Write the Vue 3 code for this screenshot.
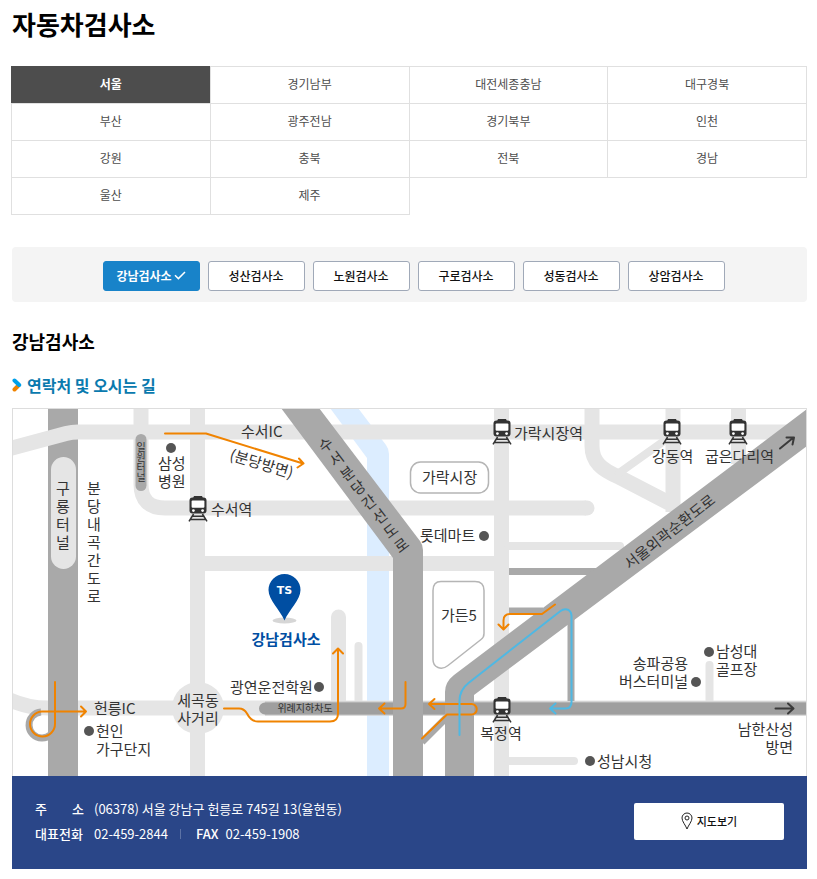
<template>
  <main class="page">
    <h1 class="page-title">자동차검사소</h1>

    <ul class="region-list">
      <li v-for="region in regions" :key="region" class="region-item">
        <a
          href="#"
          class="region-link"
          :class="{ active: region === activeRegion }"
          @click.prevent="activeRegion = region"
        >{{ region }}</a>
      </li>
    </ul>

    <div class="center-list">
      <button
        v-for="center in centers"
        :key="center"
        type="button"
        class="center-btn"
        :class="{ active: center === activeCenter }"
        @click="activeCenter = center"
      >
        {{ center }}
        <svg v-if="center === activeCenter" class="check-icon" viewBox="0 0 12 9" aria-hidden="true">
          <path d="M1 4.2 4.4 7.6 11 1" />
        </svg>
      </button>
    </div>

    <h2 class="center-title">{{ activeCenter }}</h2>

    <h3 class="section-title">
      <svg class="section-icon" viewBox="0 0 10 14" aria-hidden="true">
        <path d="M2.5 11.5 6 8" stroke="#f08300" />
        <path d="M2.5 2.5 7.2 7" stroke="#00a0e9" />
      </svg>
      연락처 및 오시는 길
    </h3>

    <div class="map-box">
      <svg class="map" viewBox="13 409 793 367">
        <defs>
          <symbol id="train" viewBox="0 0 20 26">
            <path d="M6 0h8l1 2.2H5z" fill="#333" />
            <rect x="1.5" y="1.6" width="17" height="16" rx="3" fill="#333" />
            <rect x="3.6" y="4.6" width="12.800" height="7.2" rx="1" fill="#fff" />
            <circle cx="5.4" cy="14.6" r="1.4" fill="#fff" />
            <circle cx="14.6" cy="14.6" r="1.4" fill="#fff" />
            <path
              d="M5.6 18 1 25.4M14.4 18 19 25.4M4.5 20.2h11M2.6 23.4h14.8"
              fill="none"
              stroke="#333"
              stroke-width="1.5"
            />
          </symbol>
        </defs>

        <!-- 탄천 -->
        <path class="river" d="M330 408h28l28 37q3 4 3 9v323h-22V458z" />

        <!-- 분당내곡간도로 -->
        <path class="highway" d="M48 408h30v369H48z" />

        <!-- 일반도로 -->
        <g class="road">
          <path d="M10 448.500 66 433.500Q72 432 78 432H808" />
          <path d="M141 408v76q0 24 24 24h421" />
          <path d="M586 508h1" stroke-linecap="round" />
          <path d="M197.500 408v369" />
          <path d="M204 563.500h298" />
          <path d="M501.500 408v369" />
          <path d="M592 408v38c0 16 10 24 27 31l50 26" />
          <path d="M673 408v104" />
          <path d="M738.500 408v56" />
          <path d="M338.500 617v86" stroke-linecap="round" />
          <path d="M10 700q18 8 38 8M78 708H808" />
          <path d="M619 473 664 441M508 546h112M358.500 646v56M709.500 665v40M508 761h66" class="road-thin" />
        </g>
        <circle cx="198" cy="708" r="26" fill="#e5e5e5" />

        <!-- 연결로 -->
        <g class="ramp">
          <path d="M509 571.500h90M509 611h34M571 600v101M422 742l28-28" />
          <path d="M41 712a13 13 0 1 0 14 14" />
        </g>

        <!-- 지하차도 -->
        <path d="M265 708.500H808" stroke="#c4c4c4" stroke-width="14" fill="none" />
        <path d="M300 708.500H808M300 708.500H265" stroke="#9f9f9f" stroke-width="12" fill="none" stroke-linecap="round" />

        <path class="highway" d="M281 408h38l101 133q3 4 3 9v227h-30V558z" />
        <path class="highway" d="M807 409 454 675q-9 7-9 17v85h29v-82L807 446z" />

        <rect x="51" y="457" width="25" height="112" rx="12.500" fill="#e5e5e5" />
        <rect x="135.500" y="434" width="11" height="57" rx="5.500" fill="#a9a9a9" />
        <rect class="area" x="410.500" y="462" width="78" height="31" rx="10" />
        <path class="area" d="M441 581.500h34q9 0 9 9v43q0 4-3 6l-33 26q-5 4-10 2t-5-8v-69q0-9 8-9z" />

        <!-- 길 안내 -->
        <g class="route">
          <path d="M165 433.500h41l97 30M299 458.500l4.500 5-6 4" />
          <path d="M55 682v42a12.500 12.500 0 1 1-13-12.500h44M81 706.500l5 5-5 5" />
          <path d="M224 708.500h15q5 0 8 5 4 8 11 8h72q8 0 8-8V649M333 653.500l5-5 5 5" />
          <path d="M405.500 682v22q0 4.500-4.500 4.500h-22M384.500 703.500l-5.500 5 5.500 5" />
          <path d="M555 604.500l-13 9.500h-32q-6.500 0-6.500 6.500V629M498.500 624.500l5 5 5-5" />
          <path d="M422 738.500l25-24h24.500a5.200 5.200 0 0 0 0-10.500H429M434.500 699l-5.500 5 5.500 5" />
        </g>
        <g class="route route-blue">
          <path d="M459.500 735v-34q0-11 9-18l92-72q4-3 8-1 3 2 3 6v86q0 6.500-6.500 6.500H550M555.500 703.500l-5.500 5 5.500 5" />
        </g>
        <g class="route route-dark">
          <path d="M775.500 708.500H793M788 703.500l5.500 5-5.500 5" />
          <path d="M780 448.500l13.500-11M786.500 437.500h7.500l-1.500 7" />
        </g>

        <use
          v-for="(train, i) in trains"
          :key="'train' + i"
          href="#train"
          :x="train.x - 10"
          :y="train.y"
          width="20"
          height="26"
        />
        <circle v-for="(dot, i) in dots" :key="'dot' + i" :cx="dot[0]" :cy="dot[1]" r="5" fill="#555" />

        <ellipse cx="284.500" cy="620.500" rx="12" ry="3" fill="#d6d6d6" />
        <path d="M284.500 620.500C280 610 268.500 600 268.500 590a16 16 0 0 1 32 0c0 10-11.500 20-16 30.500z" fill="#004ea2" />
        <text class="pin-text" x="284.500" y="594">TS</text>

        <text
          v-for="label in labels"
          :key="label.text"
          class="label"
          :class="label.type"
          :x="label.x"
          :y="label.y"
        >{{ label.text }}</text>

        <text class="label middle" transform="translate(260 469) rotate(17)">(분당방면)</text>
        <text class="label middle" transform="translate(673 536) rotate(-38)">서울외곽순환도로</text>

        <!-- 세로 글자 -->
        <text
          v-for="road in verticalLabels"
          :key="road.text"
          class="label middle"
          :class="road.type"
          :transform="road.transform"
          :x="charPositions(road.text, 0)"
          :y="charPositions(road.text, road.step)"
        >{{ road.text }}</text>
      </svg>
    </div>

    <div class="contact">
      <dl class="contact-info">
        <div class="contact-row">
          <dt class="spread"><span>주</span><span>소</span></dt>
          <dd>(06378) 서울 강남구 헌릉로 745길 13(율현동)</dd>
        </div>
        <div class="contact-row">
          <dt>대표전화</dt>
          <dd>02-459-2844</dd>
          <dt class="fax">FAX</dt>
          <dd>02-459-1908</dd>
        </div>
      </dl>
      <a href="#" class="map-link">
        <svg class="marker-icon" viewBox="0 0 12 18" aria-hidden="true">
          <path d="M6 17C4.500 13 1 9.500 1 6a5 5 0 0 1 10 0c0 3.500-3.500 7-5 11z" />
          <circle cx="6" cy="6" r="2" />
        </svg>
        지도보기
      </a>
    </div>
  </main>
</template>

<script setup>
import { ref } from 'vue'

const regions = [
  '서울', '경기남부', '대전세종충남', '대구경북',
  '부산', '광주전남', '경기북부', '인천',
  '강원', '충북', '전북', '경남',
  '울산', '제주'
]
const activeRegion = ref('서울')

const centers = ['강남검사소', '성산검사소', '노원검사소', '구로검사소', '성동검사소', '상암검사소']
const activeCenter = ref('강남검사소')

// 지하철역 아이콘 위치
const trains = [
  { x: 502, y: 419 },
  { x: 672, y: 419 },
  { x: 738, y: 419 },
  { x: 198, y: 496 },
  { x: 502, y: 697 }
]

const dots = [
  [171, 448], [484, 536], [319, 687], [89, 731], [709, 652], [696, 682], [590, 761]
]

const labels = [
  { text: '삼성', x: 158, y: 469 },
  { text: '병원', x: 158, y: 487 },
  { text: '수서IC', x: 241, y: 437 },
  { text: '수서역', x: 211, y: 515 },
  { text: '가락시장역', x: 514, y: 439 },
  { text: '강동역', x: 652, y: 462 },
  { text: '굽은다리역', x: 705, y: 462 },
  { text: '가락시장', x: 422, y: 483 },
  { text: '롯데마트', x: 420, y: 541 },
  { text: '가든5', x: 441, y: 621 },
  { text: '강남검사소', x: 286, y: 645, type: 'here middle' },
  { text: '광연운전학원', x: 230, y: 693 },
  { text: '헌릉IC', x: 94, y: 714 },
  { text: '헌인', x: 96, y: 737 },
  { text: '가구단지', x: 96, y: 755 },
  { text: '세곡동', x: 198, y: 706, type: 'middle' },
  { text: '사거리', x: 198, y: 724, type: 'middle' },
  { text: '위례지하차도', x: 305, y: 712, type: 'small middle' },
  { text: '복정역', x: 501, y: 739, type: 'middle' },
  { text: '송파공용', x: 688, y: 669, type: 'end' },
  { text: '버스터미널', x: 688, y: 687, type: 'end' },
  { text: '남성대', x: 716, y: 657 },
  { text: '골프장', x: 716, y: 675 },
  { text: '남한산성', x: 793, y: 735, type: 'end' },
  { text: '방면', x: 793, y: 753, type: 'end' },
  { text: '성남시청', x: 597, y: 767 }
]

const verticalLabels = [
  { text: '구룡터널', transform: 'translate(63 494)', step: 18 },
  { text: '분당내곡간도로', transform: 'translate(94 494)', step: 18 },
  { text: '일원터널', transform: 'translate(141 451)', step: 10, type: 'small' },
  { text: '수서분당간선도로', transform: 'translate(329 449) rotate(-37)', step: 18 }
]

// 글자마다 한 칸씩 내려가는 좌표 목록
const charPositions = (text, step) => [...text].map((_, i) => i * step).join(' ')
</script>

<style>
body {
  margin: 0;
  background: #fff;
}
</style>

<style scoped>
.page {
  padding: 8px 10px 10px 12px;
  font-family: "Noto Sans CJK KR", "Noto Sans", sans-serif;
  font-size: 13px;
  color: #000;
}

.page-title {
  margin: 0 0 24px;
  font-size: 26px;
  font-weight: 700;
  line-height: 32px;
  padding-bottom: 2px;
}

.region-list {
  display: grid;
  grid-template-columns: repeat(4, 1fr);
  margin: 0 0 32px;
  padding: 1px 0 0;
  list-style: none;
}

.region-item {
  margin: -1px 0 0 -1px;
}

.region-link {
  display: block;
  padding-bottom: 2px;
  border: 1px solid #e0e0e0;
  font-size: 12px;
  line-height: 34px;
  text-align: center;
  text-decoration: none;
  color: #4d4d4d;
}

.region-link.active {
  border-color: #4d4d4d;
  background: #4d4d4d;
  color: #fff;
  font-weight: 700;
}

.center-list {
  display: flex;
  flex-wrap: wrap;
  justify-content: center;
  padding: 14px 0 11px;
  border-radius: 4px;
  background: #f4f4f4;
}

.center-btn {
  display: flex;
  align-items: center;
  justify-content: center;
  gap: 2px;
  width: 97px;
  height: 30px;
  margin: 0 0 0 8px;
  padding: 0 0 2px;
  border: 1px solid #a0a9b8;
  border-radius: 3px;
  background: #fff;
  font-family: inherit;
  font-size: 12px;
  font-weight: 500;
  color: #111;
  cursor: pointer;
}

.center-btn.active {
  border-color: #1883c9;
  background: #1883c9;
  font-weight: 700;
  color: #fff;
}

.check-icon {
  width: 12px;
  height: 9px;
  fill: none;
  stroke: #fff;
  stroke-width: 1.5;
}

.center-title {
  margin: 26px 0 19px;
  font-size: 18px;
  font-weight: 700;
  line-height: 26px;
}

.section-title {
  display: flex;
  align-items: center;
  gap: 5px;
  margin: 0 0 11px;
  font-size: 16px;
  font-weight: 700;
  line-height: 24px;
  color: #0a7aae;
}

.section-icon {
  width: 10px;
  height: 14px;
  fill: none;
  stroke-width: 4;
  stroke-linecap: round;
}

.map-box {
  border: 1px solid #ddd;
  border-bottom: 0;
}

.map {
  display: block;
  width: 100%;
  height: auto;
}

.river {
  fill: #dcedff;
}

.highway {
  fill: #a9a9a9;
}

.road {
  fill: none;
  stroke: #e5e5e5;
  stroke-width: 15;
}

.road-thin {
  stroke-width: 8;
  stroke-linecap: round;
}

.ramp {
  fill: none;
  stroke: #a9a9a9;
  stroke-width: 7;
}

.area {
  fill: #fff;
  stroke: #b5b5b5;
  stroke-width: 1.5;
}

.route {
  fill: none;
  stroke: #f08300;
  stroke-width: 2;
  stroke-linecap: round;
  stroke-linejoin: round;
}

.route-blue {
  stroke: #4fb8e3;
}

.route-dark {
  stroke: #3a3a3a;
}

.label {
  font-size: 15px;
  fill: #333;
}

.middle {
  text-anchor: middle;
}

.end {
  text-anchor: end;
}

.small {
  font-size: 10px;
}

.here {
  font-weight: 700;
  fill: #004ea2;
}

.pin-text {
  font-family: "DejaVu Sans", sans-serif;
  font-size: 11px;
  font-weight: 700;
  text-anchor: middle;
  fill: #fff;
}

.contact {
  display: flex;
  align-items: center;
  justify-content: space-between;
  padding: 20px 23px 23px;
  background: #2a4688;
  color: #fff;
}

.contact-info {
  margin: 0;
}

.contact-row {
  display: flex;
  line-height: 25px;
}

.contact-row dt {
  min-width: 49px;
  margin-right: 10px;
  font-weight: 500;
}

.contact-row dt.spread {
  display: flex;
  justify-content: space-between;
}

.contact-row dt.fax {
  display: flex;
  align-items: center;
  min-width: 0;
  margin: 0 7px 0 12px;
}

.fax::before {
  content: "";
  height: 10px;
  margin-right: 15px;
  border-left: 1px solid #5c72a5;
}

.contact-row dd {
  margin: 0;
}

.map-link {
  display: flex;
  align-items: center;
  justify-content: center;
  gap: 4px;
  width: 150px;
  height: 37px;
  border-radius: 2px;
  background: #fff;
  font-size: 11px;
  font-weight: 500;
  text-decoration: none;
  color: #111;
}

.marker-icon {
  width: 12px;
  height: 18px;
  fill: none;
  stroke: #222;
}
</style>
